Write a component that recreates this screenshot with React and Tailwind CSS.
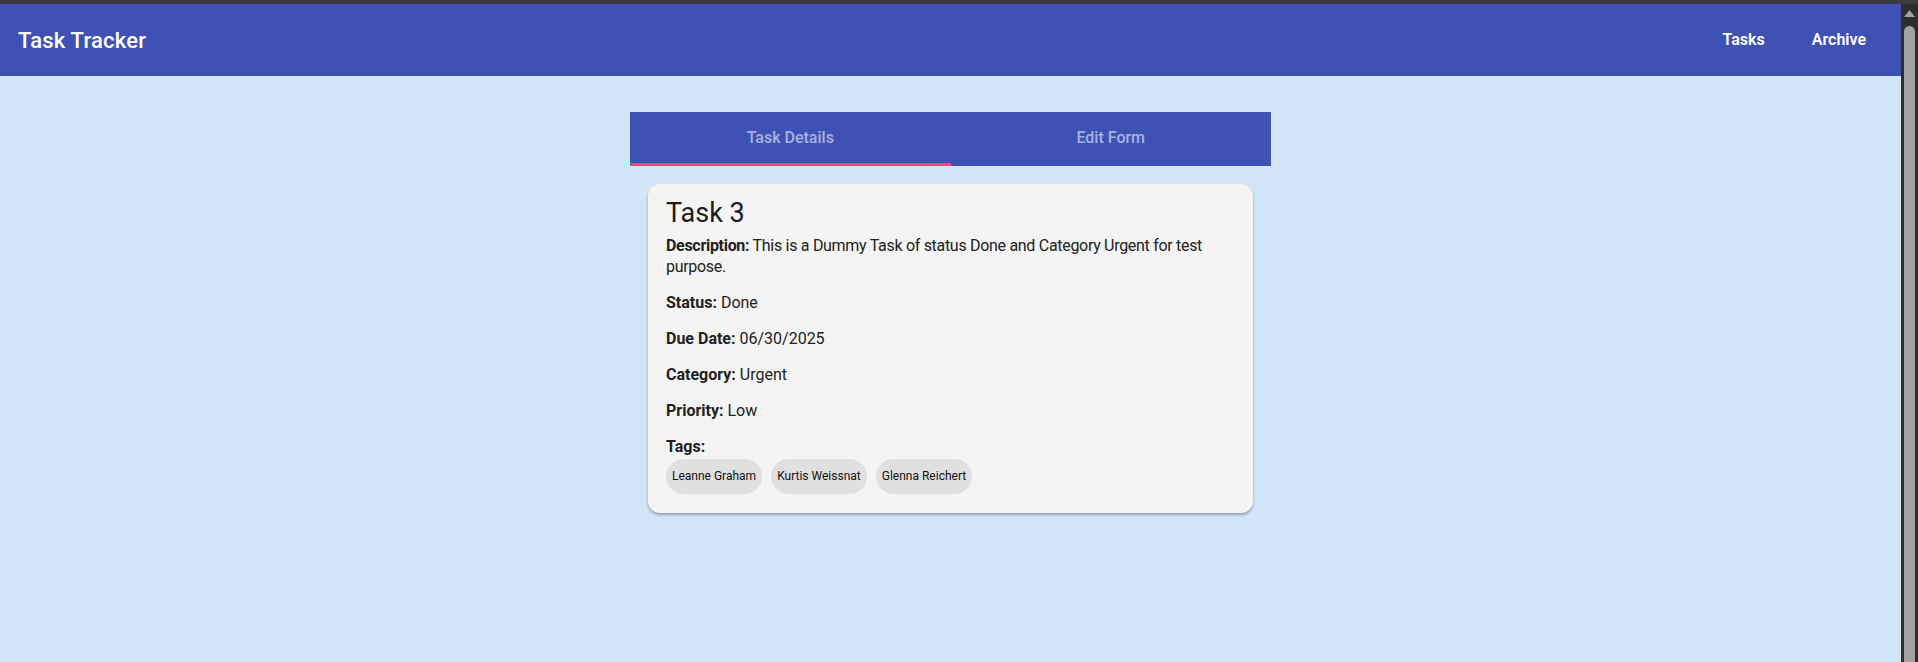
export default function App() {
  const task = {
    title: "Task 3",
    description: "This is a Dummy Task of status Done and Category Urgent for test purpose.",
    status: "Done",
    dueDate: "06/30/2025",
    category: "Urgent",
    priority: "Low",
    tags: ["Leanne Graham", "Kurtis Weissnat", "Glenna Reichert"],
  };

  const fields = [
    ["Status:", task.status],
    ["Due Date:", task.dueDate],
    ["Category:", task.category],
    ["Priority:", task.priority],
  ];

  return (
    <div className="h-[662px] overflow-hidden flex flex-col bg-[#d2e6f7] font-['Roboto',sans-serif]">
      <div className="h-[4px] bg-[#3c3c3c] shrink-0"></div>
      <div className="flex flex-1 min-h-0">
        <div className="flex-1 flex flex-col">
          {/* app bar */}
          <header className="h-[72px] shrink-0 bg-[#3f51b5] flex items-center justify-between pl-[18px] pr-[35px]">
            <h1 className="text-[22px] font-medium text-white tracking-[0.2px]">Task Tracker</h1>
            <nav className="flex items-center gap-[47px] text-[16px] font-semibold text-white">
              <span>Tasks</span>
              <span>Archive</span>
            </nav>
          </header>

          <main className="pt-[36px]">
            {/* tabs */}
            <div className="w-[641px] mx-auto grid grid-cols-2 bg-[#3f51b5]">
              <div className="h-[54px] flex flex-col">
                <div className="flex-1 flex items-center justify-center text-[16px] font-medium text-[#aab1df]">Task Details</div>
                <div className="h-[3px] bg-[#f0447f]"></div>
              </div>
              <div className="h-[54px] flex flex-col">
                <div className="flex-1 flex items-center justify-center text-[16px] font-medium text-[#aab1df]">Edit Form</div>
                <div className="h-[3px]"></div>
              </div>
            </div>

            {/* details card */}
            <div className="w-[605px] mx-auto mt-[18px] bg-[#f4f4f4] rounded-xl shadow-[0_2px_3px_rgba(0,0,0,0.3)] px-[18px] pt-[13px] pb-[19px] text-[#212121]">
              <h2 className="text-[27px] leading-[32px] font-normal text-[#1c1c1c]">{task.title}</h2>
              <div className="mt-[6px] flex flex-col gap-[15px] text-[16px] leading-[21px]">
                <p className="tracking-[-0.3px]">
                  <span className="font-bold">Description:</span> {task.description}
                </p>
                {fields.map(([label, value]) => (
                  <p key={label}>
                    <span className="font-bold">{label}</span> {value}
                  </p>
                ))}
                <div>
                  <p className="font-bold">Tags:</p>
                  <div className="mt-[2px] flex gap-[9px]">
                    {task.tags.map((tag) => (
                      <span key={tag} className="h-[35px] px-[6px] rounded-full bg-[#e0e0e0] flex items-center text-[12px] text-[#111]">
                        {tag}
                      </span>
                    ))}
                  </div>
                </div>
              </div>
            </div>
          </main>
        </div>

        {/* window scrollbar */}
        <div className="w-[17px] shrink-0 bg-[#2d2d2d] flex flex-col items-center pt-[6px]">
          <svg width="11" height="8" viewBox="0 0 11 8">
            <path d="M5.5 0 L11 7 L0 7 Z" fill="#a3a3a3" />
          </svg>
          <div className="mt-[8px] w-[11px] flex-1 rounded-t-full bg-[#a3a3a3]"></div>
        </div>
      </div>
    </div>
  );
}
